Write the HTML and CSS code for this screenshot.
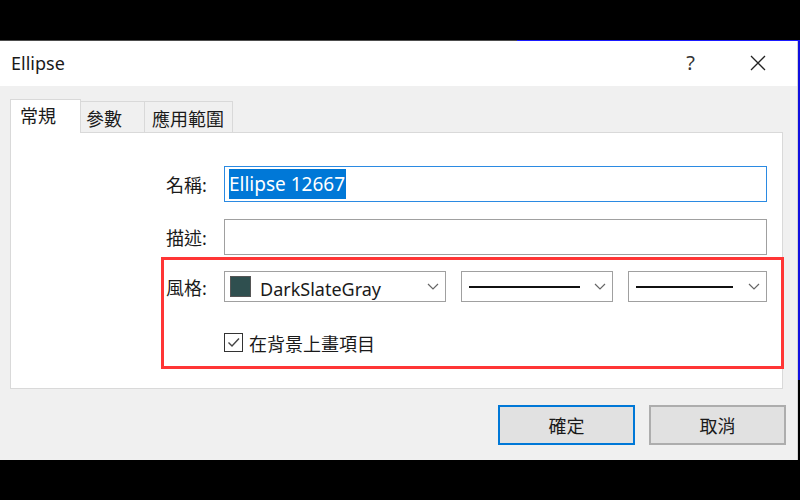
FILE: index.html
```html
<!DOCTYPE html>
<html lang="zh-Hant">
<head>
  <meta charset="UTF-8" />
  <title>Ellipse</title>
  <link rel="stylesheet" href="styles.css">
</head>
<body>
  <div class="edge-top"></div>
  <div class="edge-right"></div>

  <div class="window">
    <div class="titlebar">
      <span class="title">Ellipse</span>
      <span class="help">?</span>
      <svg class="close" width="16" height="16" viewBox="0 0 16 16">
        <path d="M1 1 L15 15 M15 1 L1 15" stroke="#222" stroke-width="1.3" fill="none"/>
      </svg>
    </div>

    <div class="content">
      <div class="tabs">
        <div class="tab active tab-general">常規</div>
        <div class="tab tab-params">參數</div>
        <div class="tab tab-scope">應用範圍</div>
      </div>

      <div class="panel">
        <div class="form">
          <label class="lbl">名稱:</label>
          <div class="field focused"><span class="selected">Ellipse 12667</span></div>

          <label class="lbl row-desc">描述:</label>
          <div class="field row-desc"></div>

          <label class="lbl row-style">風格:</label>
          <div class="combos row-style">
            <div class="combo combo-color">
              <span class="swatch"></span>
              <span class="combo-text">DarkSlateGray</span>
              <svg class="chev" width="12" height="7" viewBox="0 0 12 7"><path d="M1 1 L6 6 L11 1" stroke="#666" stroke-width="1.2" fill="none"/></svg>
            </div>
            <div class="combo combo-line wide">
              <span class="line"></span>
              <svg class="chev" width="12" height="7" viewBox="0 0 12 7"><path d="M1 1 L6 6 L11 1" stroke="#666" stroke-width="1.2" fill="none"/></svg>
            </div>
            <div class="combo combo-line narrow">
              <span class="line"></span>
              <svg class="chev" width="12" height="7" viewBox="0 0 12 7"><path d="M1 1 L6 6 L11 1" stroke="#666" stroke-width="1.2" fill="none"/></svg>
            </div>
          </div>

          <div class="check-row">
            <span class="checkbox">
              <svg width="17" height="17" viewBox="0 0 17 17"><path d="M3.5 8.5 L7 12 L14 4.5" stroke="#444" stroke-width="1.4" fill="none"/></svg>
            </span>
            <span>在背景上畫項目</span>
          </div>
        </div>

        <div class="highlight"></div>
      </div>

      <div class="buttons">
        <button class="btn default">確定</button>
        <button class="btn">取消</button>
      </div>
    </div>
  </div>
</body>
</html>
```

FILE: styles.css
```css
body {
  margin: 0;
  width: 800px;
  height: 500px;
  background-color: #000;
  font-family: "Noto Sans", "Noto Sans CJK TC", sans-serif;
  color: #1a1a1a;
  position: relative;
  overflow: hidden;
}
.edge-top {
  position: absolute;
  left: 517px;
  top: 40px;
  width: 283px;
  height: 1px;
  background-color: #1a1aff;
  z-index: 2;
}
.edge-right {
  position: absolute;
  left: 798px;
  top: 40px;
  width: 2px;
  height: 340px;
  background-color: #1010e0;
}
.window {
  margin-top: 40px;
  width: 797px;
  height: 419px;
  background-color: #f0f0f0;
  border-top: 1px solid #4d4d4d;
  border-right: 1px solid #d4d4d4;
}
.titlebar {
  height: 45px;
  background-color: #fff;
  display: flex;
  align-items: center;
}
.title {
  font-size: 18px;
  padding-left: 11px;
  flex: 1;
  margin-top: -2px;
}
.help {
  font-size: 20px;
  color: #333;
  margin-right: 55px;
  margin-top: -2px;
}
.close {
  margin-right: 31px;
  margin-top: -2px;
}
.content {
  padding: 13px 0 0 10px;
}
.tabs {
  display: flex;
  align-items: flex-end;
  height: 33px;
}
.tab {
  box-sizing: border-box;
  height: 31px;
  border: 1px solid #d9d9d9;
  border-bottom: none;
  background-color: #f0f0f0;
  font-size: 18px;
  padding-top: 7px;
  line-height: 20px;
}
.tab.active {
  height: 34px;
  margin-bottom: -1px;
  background-color: #fff;
  position: relative;
  z-index: 1;
  padding-top: 6px;
}
.tab-general {
  width: 71px;
  padding-left: 9px;
}
.tab-params {
  width: 64px;
  padding-left: 5px;
  border-left: none;
}
.tab-scope {
  width: 88px;
  padding-left: 7px;
  border-left: none;
}
.panel {
  box-sizing: border-box;
  width: 773px;
  height: 257px;
  background-color: #fff;
  border: 1px solid #d9d9d9;
  position: relative;
  padding-top: 33px;
}
.form {
  display: grid;
  grid-template-columns: 199px 543px;
  column-gap: 14px;
  align-items: center;
}
.lbl {
  font-size: 18px;
  padding-left: 155px;
}
.field {
  box-sizing: border-box;
  height: 36px;
  border: 1px solid #a0a0a0;
  display: flex;
  align-items: center;
  padding-left: 4px;
}
.field.focused {
  border-color: #2b8ae2;
}
.selected {
  background-color: #0078d7;
  color: #fff;
  font-size: 19px;
  line-height: 30px;
  padding-right: 1px;
}
.row-desc {
  margin-top: 17px;
}
.row-style {
  margin-top: 16px;
}
.combos {
  display: flex;
  gap: 15px;
}
.combo {
  box-sizing: border-box;
  height: 31px;
  border: 1px solid #a0a0a0;
  display: flex;
  align-items: center;
  position: relative;
  overflow: hidden;
}
.combo-color {
  width: 222px;
  padding-left: 5px;
}
.combo-line.wide {
  width: 152px;
  padding-left: 7px;
}
.combo-line.narrow {
  width: 139px;
  padding-left: 7px;
}
.swatch {
  width: 19px;
  height: 19px;
  background-color: #2f4f4f;
  border: 1px solid #555;
  flex-shrink: 0;
}
.combo-text {
  font-size: 18px;
  line-height: 20px;
  margin-left: 9px;
  margin-top: 4px;
  flex: 1;
  white-space: nowrap;
}
.line {
  height: 2px;
  background-color: #111;
  flex: 1;
}
.wide .line {
  max-width: 111px;
}
.narrow .line {
  max-width: 97px;
}
.chev {
  margin-left: auto;
  margin-right: 6px;
  flex-shrink: 0;
}
.check-row {
  grid-column: 2;
  margin-top: 31px;
  display: flex;
  align-items: center;
  gap: 6px;
  font-size: 18px;
  height: 19px;
}
.checkbox {
  box-sizing: border-box;
  width: 19px;
  height: 19px;
  border: 1px solid #333;
  display: flex;
}
.highlight {
  position: absolute;
  left: 150px;
  top: 124px;
  width: 623px;
  height: 112px;
  box-sizing: border-box;
  border: 3px solid #ff3535;
}
.buttons {
  display: flex;
  justify-content: flex-end;
  gap: 14px;
  margin-top: 16px;
  padding-right: 11px;
}
.btn {
  width: 137px;
  height: 40px;
  background-color: #e1e1e1;
  border: 2px solid #adadad;
  font-family: "Noto Sans", "Noto Sans CJK TC", sans-serif;
  font-size: 18px;
  color: #1a1a1a;
  padding: 0;
}
.btn.default {
  border-color: #0078d7;
}
```
